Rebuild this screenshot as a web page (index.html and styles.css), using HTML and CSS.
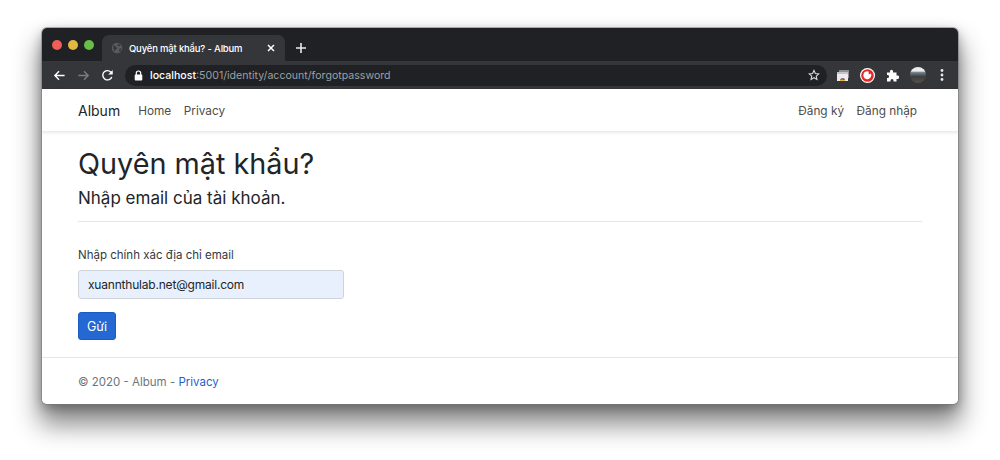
FILE: index.html
```html
<!DOCTYPE html>
<html lang="vi">
<head>
<meta charset="utf-8">
<title>Quyên mật khẩu? - Album</title>
<link rel="stylesheet" href="styles.css">
</head>
<body>
<div class="window">
  <div class="tabstrip">
    <div class="lights"><span class="light red"></span><span class="light yellow"></span><span class="light green"></span></div>
    <div class="tab">
      <svg class="favicon" width="16" height="16" viewBox="0 0 16 16"><circle cx="8" cy="8" r="7" fill="#5a5b5e"/><path d="M3 4l4 2 1 3-2 1-1 3-2-4zM9 2l4 2-2 2-2-1zM11 9l3-1-1 4-2 1z" fill="#38393c"/></svg>
      <span class="tab-title">Quyên mật khẩu? - Album</span>
      <svg class="tab-close" width="10" height="10" viewBox="0 0 10 10"><path d="M2 2l6 6M8 2l-6 6" stroke="#fff" stroke-width="1.500"/></svg>
    </div>
    <svg class="newtab" width="12" height="12" viewBox="0 0 12 12"><path d="M6 1v10M1 6h10" stroke="#e8eaed" stroke-width="1.600"/></svg>
  </div>
  <div class="toolbar">
    <svg class="nav-icon" width="14" height="14" viewBox="0 0 14 14"><path d="M12.500 7H2M6.500 2.500L2 7l4.500 4.500" fill="none" stroke="#fff" stroke-width="1.500"/></svg>
    <svg class="nav-icon" width="14" height="14" viewBox="0 0 14 14"><path d="M1.500 7H12M7.500 2.500L12 7l-4.500 4.500" fill="none" stroke="#7c7d80" stroke-width="1.500"/></svg>
    <svg class="nav-icon" width="14" height="14" viewBox="0 0 14 14"><path d="M11.600 8.500A5 5 0 1 1 10.500 3.200L12 4.700" fill="none" stroke="#fff" stroke-width="1.500"/><path d="M12.600 1.200V6H7.800z" fill="#fff"/></svg>
    <div class="omnibox">
      <svg class="lock" width="9" height="11" viewBox="0 0 9 11"><path d="M2.300 5V3.200a2.200 2.200 0 0 1 4.400 0V5" fill="none" stroke="#fff" stroke-width="1.200"/><rect x="0.700" y="4.500" width="7.600" height="6" rx="1" fill="#fff"/></svg>
      <span class="url"><b class="host">localhost</b>:5001/identity/account/forgotpassword</span>
      <svg class="star" width="12" height="12" viewBox="0 0 24 24"><path d="M12 2.800l2.800 6.200 6.700.7-5 4.500 1.400 6.600L12 17.400l-5.900 3.400 1.400-6.600-5-4.500 6.700-.7z" fill="none" stroke="#d5d7da" stroke-width="2.200"/></svg>
    </div>
    <div class="extensions">
      <svg width="12" height="11" viewBox="0 0 12 11"><rect x="2" y="0" width="10" height="8" fill="#8d8f92"/><rect x="0" y="2" width="11" height="9" fill="#ececec"/><rect x="0" y="2" width="11" height="2" fill="#c4c4c4"/><path d="M3 10.500a2.500 2.500 0 0 1 5 0z" fill="#d9503f"/><path d="M5.500 10.500V8A2.500 2.500 0 0 1 8 10.500z" fill="#3f7fdc"/><rect x="3" y="10" width="5" height="1" fill="#e3b93f"/></svg>
      <svg width="15" height="15" viewBox="0 0 15 15"><circle cx="7.500" cy="7.500" r="7.500" fill="#fff"/><circle cx="7.500" cy="7.500" r="6.300" fill="#dd2a2a"/><path d="M11 5.600A4 4 0 1 1 8.600 3.400L8.800 6.500z" fill="#fff"/></svg>
      <svg width="13" height="13" viewBox="0 0 13 13"><path d="M1 3.500h3V2.200a1.500 1.500 0 0 1 3 0V3.500h3.500V6.500h1a1.700 1.700 0 0 1 0 3.400h-1V12.500H7.500v-1a1.500 1.500 0 0 0-3 0v1H1V9h1a1.600 1.600 0 0 0 0-3H1z" fill="#fff"/></svg>
      <span class="avatar"></span>
      <svg class="menu" width="4" height="12" viewBox="0 0 4 12"><circle cx="2" cy="1.500" r="1.400" fill="#e8eaed"/><circle cx="2" cy="6" r="1.400" fill="#e8eaed"/><circle cx="2" cy="10.500" r="1.400" fill="#e8eaed"/></svg>
    </div>
  </div>
  <div class="page">
    <nav class="navbar">
      <a class="brand">Album</a>
      <a class="nav-link">Home</a>
      <a class="nav-link">Privacy</a>
      <span class="spacer"></span>
      <a class="nav-link">Đăng ký</a>
      <a class="nav-link">Đăng nhập</a>
    </nav>
    <main class="content">
      <h1 class="title">Quyên mật khẩu?</h1>
      <h4 class="subtitle">Nhập email của tài khoản.</h4>
      <hr class="rule">
      <label class="field-label" for="email">Nhập chính xác địa chỉ email</label>
      <input class="field-input" id="email" type="text" value="xuannthulab.net@gmail.com">
      <button class="submit" type="button">Gửi</button>
    </main>
    <footer class="footer">© 2020 - Album - <a class="footer-link">Privacy</a></footer>
  </div>
</div>
</body>
</html>
```
FILE: styles.css
```css
html, body {
  margin: 0;
  padding: 0;
  height: 460px;
  overflow: hidden;
  background: #fff;
}
body {
  padding: 28px 42px 0;
  box-sizing: border-box;
  font-family: Inter, "Noto Sans", sans-serif;
}
.window {
  height: 376px;
  display: flex;
  flex-direction: column;
  border-radius: 5px;
  overflow: hidden;
  box-shadow: 0 0 0 1px rgba(120,120,120,.55), 0 18px 26px 3px rgba(0,0,0,.46), 0 4px 12px rgba(0,0,0,.32);
}
.tabstrip {
  height: 33px;
  flex: none;
  display: flex;
  align-items: flex-end;
  background: #202124;
  padding-left: 10px;
}
.lights {
  display: flex;
  gap: 6px;
  align-self: flex-start;
  padding-top: 12px;
}
.light { width: 10px; height: 10px; border-radius: 50%; }
.red { background: #ed5f57; }
.yellow { background: #e1b843; }
.green { background: #66bd48; }
.tab {
  width: 183px;
  height: 26px;
  margin-left: 8px;
  background: #35363a;
  border-radius: 7px 7px 0 0;
  display: flex;
  align-items: center;
  padding: 0 9px;
  box-sizing: border-box;
  color: #fff;
}
.favicon { width: 12px; height: 12px; flex: none; }
.tab-title {
  margin-left: 6px;
  font-size: 9.500px;
  letter-spacing: -0.180px;
  flex: 1;
  white-space: nowrap;
  font-weight: 500;
}
.newtab { margin: 0 0 7px 10px; }
.toolbar {
  height: 28px;
  flex: none;
  background: #35363a;
  display: flex;
  align-items: center;
  padding: 0 14px 0 11px;
}
.nav-icon { margin-right: 11px; width: 13px; height: 13px; flex: none; }
.omnibox {
  width: 702px;
  height: 21px;
  flex: none;
  background: #202124;
  border-radius: 11px;
  display: flex;
  align-items: center;
  padding: 0 7px 0 9px;
  box-sizing: border-box;
}
.lock { flex: none; }
.url {
  margin-left: 7px;
  flex: 1;
  font-size: 10.600px;
  color: #9aa0a6;
  white-space: nowrap;
}
.host { color: #fff; font-weight: 500; }
.star { flex: none; }
.extensions {
  flex: 1;
  display: flex;
  align-items: center;
  justify-content: space-between;
  padding-left: 10px;
}
.avatar {
  width: 16px;
  height: 16px;
  border-radius: 50%;
  background: linear-gradient(#e9edf0 0 25%, #6f7e8a 35%, #3c3e3e 60%, #55524c 100%);
}
.menu { margin-left: 3px; }
.page {
  flex: 1;
  min-height: 0;
  background: #fff;
  display: flex;
  flex-direction: column;
  color: #212529;
}
.navbar {
  height: 43px;
  flex: none;
  display: flex;
  align-items: center;
  padding: 0 35px 0 36px;
  box-shadow: 0 1px 3px rgba(0,0,0,.09);
  border-bottom: 1px solid #ececec;
  box-sizing: border-box;
  font-size: 11.800px;
  color: #4d4d4d;
}
.brand {
  font-size: 14px;
  color: #212529;
  margin-right: 18px;
}
.nav-link { margin-right: 12.500px; padding-top: 2px; }
.nav-link:last-child { margin-right: 6px; }
.spacer { flex: 1; }
.content {
  flex: 1;
  padding: 0 36px;
  min-height: 0;
}
.title {
  margin: 14px 0 0;
  font-size: 28.800px;
  line-height: 36px;
  font-weight: 400;
  color: #212529;
}
.subtitle {
  margin: 6px 0 0;
  font-size: 17px;
  line-height: 20px;
  font-weight: 400;
  color: #212529;
}
.rule {
  margin: 13px 0 0;
  border: 0;
  border-top: 1px solid #e6e6e6;
}
.field-label {
  display: block;
  margin-top: 26px;
  font-size: 11.500px;
  line-height: 15px;
  color: #343a40;
}
.field-input {
  display: block;
  width: 266px;
  height: 29px;
  margin-top: 7px;
  padding: 0 9px;
  box-sizing: border-box;
  border: 1px solid #ced4da;
  border-radius: 3px;
  background: #e8f0fe;
  font: 12px Inter, "Noto Sans", sans-serif;
  letter-spacing: -0.200px;
  color: #212529;
}
.submit {
  display: block;
  margin-top: 13px;
  width: 38px;
  height: 28px;
  padding: 0;
  background: #2468d4;
  border: 1px solid #1a5bc4;
  border-radius: 3px;
  color: #fff;
  font: 12.500px Inter, "Noto Sans", sans-serif;
}
.footer {
  flex: none;
  height: 47px;
  padding: 2px 36px 0;
  border-top: 1px solid #e6e6e6;
  display: flex;
  align-items: center;
  white-space: pre;
  font-size: 11.500px;
  color: #6c757d;
  box-sizing: border-box;
}
.footer-link { color: #1d5fd0; }
```
